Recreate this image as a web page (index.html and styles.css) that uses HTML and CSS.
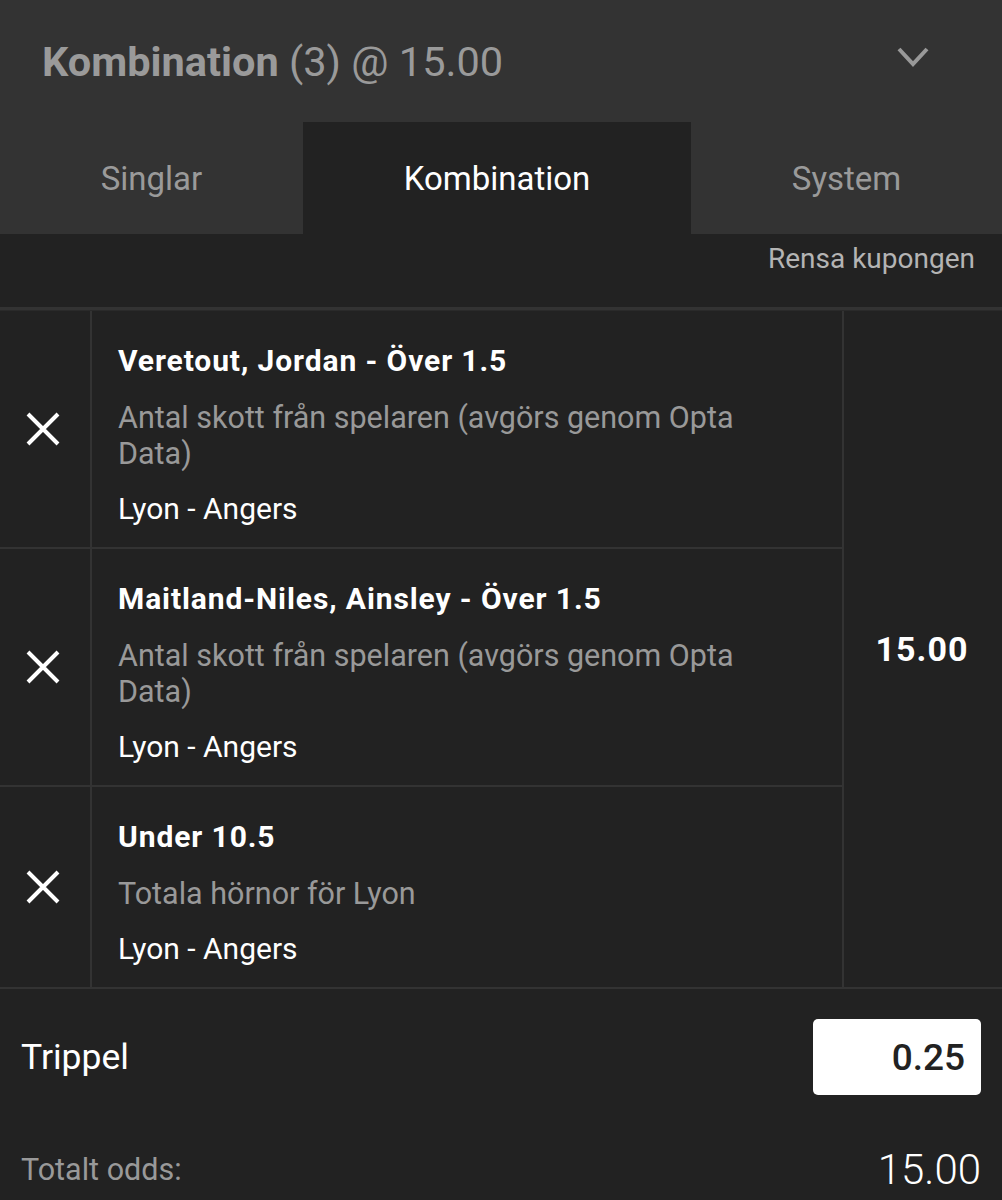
FILE: index.html
```html
<!DOCTYPE html>
<html lang="sv">
<head>
  <meta charset="UTF-8">
  <meta name="viewport" content="width=device-width, initial-scale=1.0">
  <title>Kupong - Kombination</title>
  <link rel="stylesheet" href="styles.css">
</head>
<body>
  <div class="slip">
    <!-- Header -->
    <div class="slip-header">
      <h1><strong>Kombination</strong> (3) @ 15.00</h1>
      <svg class="chevron" width="34" height="24" viewBox="0 0 34 24">
        <path d="M3 4 L17 19 L31 4" fill="none" stroke="#999" stroke-width="4"/>
      </svg>
    </div>

    <!-- Tabs -->
    <div class="tabs">
      <div class="tab">Singlar</div>
      <div class="tab active">Kombination</div>
      <div class="tab">System</div>
    </div>

    <div class="clear-row">
      <span class="clear-link">Rensa kupongen</span>
    </div>

    <!-- Selections -->
    <div class="selections">
      <div class="selection-list">
        <div class="selection">
          <div class="remove">
            <svg width="34" height="34" viewBox="0 0 34 34"><path d="M2 2 L32 32 M32 2 L2 32" stroke="#fff" stroke-width="4"/></svg>
          </div>
          <div class="info">
            <p class="pick">Veretout, Jordan - Över 1.5</p>
            <p class="market">Antal skott från spelaren (avgörs genom Opta Data)</p>
            <p class="event">Lyon - Angers</p>
          </div>
        </div>
        <div class="selection">
          <div class="remove">
            <svg width="34" height="34" viewBox="0 0 34 34"><path d="M2 2 L32 32 M32 2 L2 32" stroke="#fff" stroke-width="4"/></svg>
          </div>
          <div class="info">
            <p class="pick">Maitland-Niles, Ainsley - Över 1.5</p>
            <p class="market">Antal skott från spelaren (avgörs genom Opta Data)</p>
            <p class="event">Lyon - Angers</p>
          </div>
        </div>
        <div class="selection">
          <div class="remove">
            <svg width="34" height="34" viewBox="0 0 34 34"><path d="M2 2 L32 32 M32 2 L2 32" stroke="#fff" stroke-width="4"/></svg>
          </div>
          <div class="info">
            <p class="pick">Under 10.5</p>
            <p class="market">Totala hörnor för Lyon</p>
            <p class="event">Lyon - Angers</p>
          </div>
        </div>
      </div>
      <div class="combo-odds">15.00</div>
    </div>

    <!-- Stake -->
    <div class="stake-row">
      <span class="stake-label">Trippel</span>
      <div class="stake-input">0.25</div>
    </div>
    <div class="total-row">
      <span class="total-label">Totalt odds:</span>
      <span class="total-value">15.00</span>
    </div>
  </div>
</body>
</html>
```

FILE: styles.css
```css
body {
  margin: 0;
  padding: 0;
  background-color: #222;
  font-family: Roboto, "Liberation Sans", Arial, sans-serif;
  color: #fff;
}
p {
  margin: 0;
}
.slip {
  width: 1002px;
  background-color: #222;
}
.slip-header {
  display: flex;
  align-items: center;
  justify-content: space-between;
  height: 122px;
  padding: 0 72px 0 42px;
  background-color: #333;
  box-sizing: border-box;
}
.slip-header h1 {
  margin: 0;
  font-size: 41.5px;
  font-weight: 400;
  color: #9a9a9a;
}
.slip-header h1 strong {
  font-weight: 700;
}
.chevron {
  margin-bottom: 8px;
}
.tabs {
  display: flex;
  height: 112px;
  background-color: #333;
}
.tab {
  flex: 1 1 auto;
  display: flex;
  align-items: center;
  justify-content: center;
  font-size: 33px;
  color: #9a9a9a;
}
.tab.active {
  background-color: #222;
  color: #fff;
}
.clear-row {
  display: flex;
  justify-content: flex-end;
  align-items: center;
  box-sizing: border-box;
  height: 76px;
  padding: 0 27px 24px 0;
  border-bottom: 3px solid #333;
}
.clear-link {
  font-size: 28px;
  color: #b4b4b4;
}
.selections {
  display: flex;
  border-top: 1px solid #2a2a2a;
  border-bottom: 2px solid #333;
}
.selection-list {
  width: 842px;
  border-right: 2px solid #333;
}
.selection {
  display: flex;
  border-bottom: 2px solid #333;
}
.selection:last-child {
  border-bottom: none;
}
.remove {
  width: 90px;
  display: flex;
  align-items: center;
  justify-content: center;
  border-right: 2px solid #333;
  flex-shrink: 0;
}
.remove svg {
  margin-left: -4px;
}
.info {
  flex: 1;
  padding: 32px 80px 20px 26px;
}
.pick {
  font-size: 30px;
  font-weight: 700;
  letter-spacing: 0.9px;
  line-height: 36px;
}
.market {
  margin-top: 21px;
  font-size: 30.5px;
  line-height: 36px;
  color: #999;
}
.event {
  margin-top: 19px;
  font-size: 30px;
  line-height: 36px;
}
.combo-odds {
  flex: 1;
  display: flex;
  align-items: center;
  justify-content: center;
  font-size: 34px;
  font-weight: 700;
  letter-spacing: 1px;
  padding-right: 2px;
}
.stake-row {
  display: flex;
  justify-content: space-between;
  align-items: center;
  padding: 30px 21px 0 21px;
}
.stake-label {
  font-size: 35.5px;
}
.stake-input {
  width: 168px;
  height: 76px;
  box-sizing: border-box;
  padding-right: 16px;
  display: flex;
  align-items: center;
  justify-content: flex-end;
  background-color: #fff;
  border-radius: 5px;
  color: #222;
  font-size: 37px;
  font-weight: 500;
}
.total-row {
  display: flex;
  justify-content: space-between;
  align-items: center;
  padding: 50px 21px 0 21px;
}
.total-label {
  font-size: 30.5px;
  color: #999;
}
.total-value {
  font-size: 42px;
  font-weight: 300;
}
```
